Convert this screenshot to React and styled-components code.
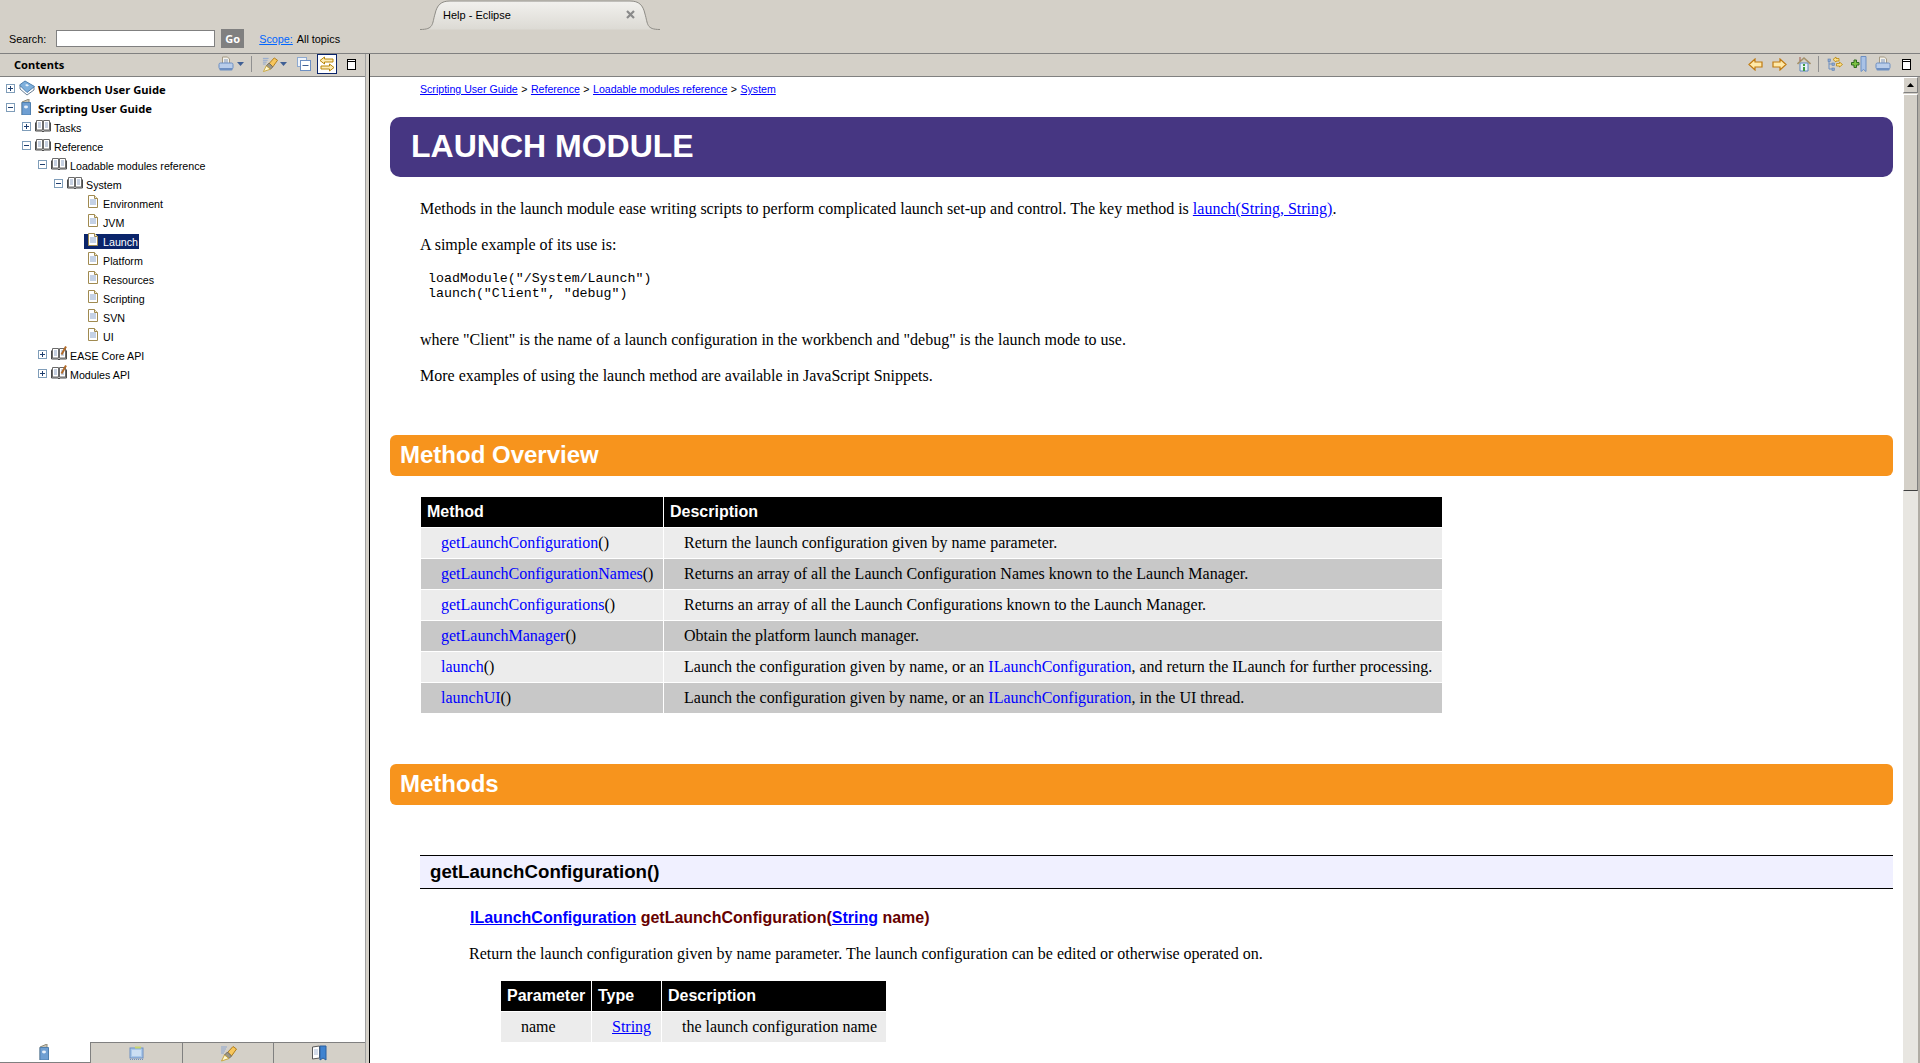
import React from "react";
import styled, { createGlobalStyle } from "styled-components";

const GlobalStyle = createGlobalStyle`
  html, body {
    margin: 0;
    padding: 0;
    height: 100%;
    overflow: hidden;
    background: #d4d0c8;
  }
  * { box-sizing: border-box; }
`;

const UI_FONT = `"Liberation Sans", Arial, sans-serif`;
const UI_BOLD = `"Noto Sans", "DejaVu Sans", sans-serif`;
const ARIAL = `"Liberation Sans", Arial, sans-serif`;
const TIMES = `"Liberation Serif", "Times New Roman", serif`;

const Shell = styled.div`
  width: 1920px;
  height: 1063px;
  display: flex;
  flex-direction: column;
  overflow: hidden;
  background: #d4d0c8;
  font-family: ${UI_FONT};
`;

const TabStrip = styled.div`
  height: 30px;
  padding-left: 420px;
  display: flex;
`;

const WindowTab = styled.div`
  position: relative;
  width: 240px;
  height: 30px;
  display: flex;
  align-items: center;
  justify-content: space-between;
  padding: 0 25px 1px 23px;
  font-size: 11px;
  color: #000;

  svg.shape {
    position: absolute;
    left: 0;
    top: 0;
  }
  span, svg.close {
    position: relative;
  }
`;

const SearchRow = styled.div`
  height: 23px;
  display: flex;
  align-items: center;
  padding: 0 0 6px 9px;
  font-size: 10.8px;
  color: #000;
`;

const SearchInput = styled.div`
  width: 159px;
  height: 17px;
  margin-left: 10px;
  background: #fff;
  border: 1px solid #808080;
`;

const GoButton = styled.div`
  width: 23px;
  height: 19px;
  margin-left: 6px;
  background: #808080;
  color: #fff;
  font: bold 11px ${UI_BOLD};
  display: flex;
  align-items: center;
  justify-content: center;
`;

const ScopeLink = styled.a`
  margin-left: 15px;
  color: #0066ff;
  text-decoration: underline;
`;

const ScopeValue = styled.span`
  margin-left: 4px;
`;

const Panes = styled.div`
  flex: 1;
  display: flex;
  min-height: 0;
  border-top: 1px solid #808080;
`;

const LeftPane = styled.aside`
  width: 365px;
  display: flex;
  flex-direction: column;
`;

const Sash = styled.div`
  width: 5px;
  background: #d4d0c8;
  border-right: 1px solid #000;
  border-left: 1px solid #a0a0a0;
`;

const RightPane = styled.main`
  flex: 1;
  min-width: 0;
  display: flex;
  flex-direction: column;
`;

const ViewBar = styled.div`
  height: 23px;
  flex: none;
  display: flex;
  align-items: center;
  padding-bottom: 2px;
  border-bottom: 1px solid #808080;
`;

const ViewTitle = styled.div`
  width: 218px;
  padding-left: 14px;
  font: 700 11.1px ${UI_BOLD};
  color: #000;
`;

const ToolSlot = styled.div`
  width: ${(p) => p.$w}px;
  margin-left: ${(p) => p.$ml || 0}px;
  height: 16px;
  flex: none;
  display: flex;
  align-items: center;
  justify-content: center;
`;

const ToolSep = styled.div`
  width: 1px;
  height: 16px;
  flex: none;
  margin-left: ${(p) => p.$ml}px;
  background: #909090;
`;

const ToggledTool = styled.div`
  width: 20px;
  height: 20px;
  flex: none;
  margin-left: ${(p) => p.$ml}px;
  background: #fff;
  border: 1px solid #0a246a;
  display: flex;
  align-items: center;
  justify-content: center;
`;

const TreeArea = styled.div`
  flex: 1;
  background: #fff;
  padding-top: 3px;
`;

const TreeRow = styled.div`
  height: 19px;
  display: flex;
  align-items: center;
  padding-left: ${(p) => 6 + p.$level * 16}px;
  font: ${(p) => (p.$bold ? `700 11.2px ${UI_BOLD}` : `400 10.7px ${UI_FONT}`)};
  color: #000;
`;

const Expander = styled.div`
  width: 9px;
  height: 9px;
  flex: none;
  margin: -2px 4px 0 0;
  border: 1px solid #7f9db9;
  background: #fff;
  position: relative;

  &::before {
    content: "";
    position: absolute;
    left: 1px;
    top: 3px;
    width: 5px;
    height: 1px;
    background: #1f3f6f;
  }
  ${(p) =>
    p.$plus &&
    `&::after {
      content: "";
      position: absolute;
      left: 3px;
      top: 1px;
      width: 1px;
      height: 5px;
      background: #1f3f6f;
    }`}
`;

const NoExpander = styled.div`
  width: 15px;
  flex: none;
`;

const TreeIcon = styled.div`
  width: 16px;
  height: 16px;
  flex: none;
  margin-top: -3px;
`;

const TreeLabel = styled.span`
  margin: ${(p) => (p.$bold ? 0 : 2)}px 0 0 ${(p) => (p.$leaf ? 2 : 3)}px;
  line-height: 15px;
`;

const SelectedBlock = styled.div`
  display: flex;
  align-items: center;
  height: 15px;
  padding: 0 1px 0 0;
  margin-left: -1px;
  border-left: 1px solid #0a246a;
  background: #0a246a;
  color: #fff;
`;

const BottomTabs = styled.div`
  height: 21px;
  flex: none;
  display: flex;
  background: #d4d0c8;
`;

const BottomTab = styled.div`
  width: ${(p) => p.$w}px;
  display: flex;
  align-items: center;
  justify-content: center;
  background: ${(p) => (p.$active ? "#fff" : "#d4d0c8")};
  border-top: ${(p) => (p.$active ? "0" : "1px solid #808080")};
  border-bottom: ${(p) => (p.$active ? "1px solid #808080" : "0")};
  border-left: ${(p) => (p.$active ? "0" : "1px solid #808080")};
`;

const BrowserBody = styled.div`
  flex: 1;
  min-height: 0;
  display: flex;
  background: #fff;
`;

const Doc = styled.div`
  flex: 1;
  min-width: 0;
  overflow: hidden;
  padding: 0 10px 0 20px;
  font: 16px/18px ${TIMES};
  color: #000;

  a {
    color: #0000ff;
  }
`;

const Breadcrumb = styled.div`
  height: 24px;
  margin-left: 30px;
  display: flex;
  align-items: center;
  gap: 3.5px;
  font: 10.6px ${UI_FONT};

  a {
    color: #0000ff;
    text-decoration: underline;
  }
`;

const TitleBanner = styled.h1`
  height: 60px;
  margin: 16px 0 0;
  padding: 0 0 1px 21px;
  display: flex;
  align-items: center;
  background: #463682;
  border-radius: 10px;
  color: #fff;
  font: bold 32px ${ARIAL};
`;

const Para = styled.p`
  margin: ${(p) => p.$top}px 0 0 ${(p) => p.$left || 30}px;
`;

const Code = styled.pre`
  margin: 17px 0 0 38px;
  font: 13.3px/15px "Liberation Mono", "Courier New", monospace;
`;

const SectionBanner = styled.h2`
  height: 41px;
  margin: ${(p) => p.$top}px 0 0;
  padding: 0 0 2px 10px;
  display: flex;
  align-items: center;
  background: #f7941d;
  border-radius: 6px;
  color: #fff;
  font: bold 24px ${ARIAL};
`;

const DataTable = styled.table`
  margin: ${(p) => p.$top}px 0 0 ${(p) => p.$left}px;
  border-collapse: separate;
  border-spacing: 1px;
  table-layout: fixed;
`;

const HeadCell = styled.th`
  height: 30px;
  padding: 0 0 0 ${(p) => p.$pad || 6}px;
  background: #000;
  color: #fff;
  text-align: left;
  font: bold 16px ${ARIAL};
`;

const BodyRow = styled.tr`
  td {
    background: ${(p) => (p.$alt ? "#c8c8c8" : "#ececec")};
  }
`;

const BodyCell = styled.td`
  height: 30px;
  padding: 0 0 0 20px;
  white-space: nowrap;
  font: 16px/18px ${TIMES};

  a {
    text-decoration: ${(p) => (p.$underline ? "underline" : "none")};
  }
`;

const MethodHeading = styled.h3`
  height: 34px;
  margin: 50px 0 0 30px;
  padding: 0 0 1px 10px;
  display: flex;
  align-items: center;
  background: #f0f0ff;
  border-top: 1px solid #000;
  border-bottom: 1px solid #000;
  font: bold 18.7px ${ARIAL};
  color: #000;
`;

const Signature = styled.div`
  margin: 20px 0 0 80px;
  font: bold 16px/18px ${ARIAL};
  color: #660000;
`;

const ScrollTrack = styled.div`
  width: 17px;
  flex: none;
  display: flex;
  flex-direction: column;
  background: #d4d0c8;
  border-right: 2px solid #b0aca4;
`;

const ScrollButton = styled.div`
  height: 16px;
  flex: none;
  display: flex;
  align-items: center;
  justify-content: center;
  border: 1px solid;
  border-color: #fff #808080 #808080 #fff;
`;

const ScrollThumb = styled.div`
  height: 397px;
  flex: none;
  margin-top: 1px;
  background: #d4d0c8;
  border: 1px solid;
  border-color: #fff #808080 #404040 #fff;
`;

const ScrollRest = styled.div`
  flex: 1;
  background: #e8e6e1;
`;

const HelpTabShape = () => (
  <svg className="shape" width="240" height="30" viewBox="0 0 240 30">
    <defs>
      <linearGradient id="tabfill" x1="0" y1="0" x2="0" y2="1">
        <stop offset="0" stopColor="#f2f1ee" />
        <stop offset="1" stopColor="#dcdad4" />
      </linearGradient>
    </defs>
    <path
      d="M0 29.5C14 29.5 12 24 15 14 17 5 21 1 30 1H210C219 1 223 5 225 14 228 24 226 29.5 240 29.5Z"
      fill="url(#tabfill)"
    />
    <path
      d="M0 29.5C14 29.5 12 24 15 14 17 5 21 1 30 1H210C219 1 223 5 225 14 228 24 226 29.5 240 29.5"
      fill="none"
      stroke="#8e8c86"
    />
  </svg>
);

const CloseMark = () => (
  <svg className="close" width="9" height="9" viewBox="0 0 9 9">
    <path d="M1 1l7 7M8 1L1 8" stroke="#8a8a8a" strokeWidth="2.2" />
  </svg>
);

const PrintIcon = () => (
  <svg width="16" height="16" viewBox="0 0 16 16">
    <path d="M4.5 1h5l2 2v5h-7z" fill="#f4f2ea" stroke="#a59a84" />
    <path d="M6 4h4M6 6h4" stroke="#7f94b8" />
    <rect x="1" y="7" width="14" height="6" rx="1.5" fill="#b9cdea" stroke="#6d8fc2" />
    <rect x="1.5" y="12" width="13" height="2.5" rx="1" fill="#6d8fc2" />
  </svg>
);

const Caret = () => (
  <svg width="7" height="4" viewBox="0 0 7 4">
    <path d="M0 0h7L3.5 4z" fill="#3f5f94" />
  </svg>
);

const HighlightIcon = () => (
  <svg width="17" height="17" viewBox="0 0 17 17">
    <path d="M1 2h6M1 4h5M1 6h4M1 8h3" stroke="#8fa7d0" />
    <path d="M7.5 7.5L13 1.5l3.5 2.5-5 7z" fill="#f7c65c" stroke="#b07c18" />
    <path d="M4.5 10l3-3 4 4-2.5 2.5z" fill="#9c9788" stroke="#6f6a5c" />
    <path d="M1.5 16l3-6 4.500 3.500z" fill="#fff8d0" stroke="#c9a63f" />
  </svg>
);

const CollapseIcon = () => (
  <svg width="14" height="14" viewBox="0 0 14 14">
    <rect x="0.5" y="0.5" width="9" height="9" fill="#eef3fa" stroke="#8ea9cf" />
    <rect x="3.5" y="3.5" width="10" height="10" fill="#fff" stroke="#6d8fc2" />
    <path d="M5.5 8.5h6" stroke="#3f5f94" />
  </svg>
);

const SyncIcon = () => (
  <svg width="16" height="16" viewBox="0 0 16 16">
    <path d="M1 4.5L5.5 1v2H14v3H5.5v2z" fill="#fdebb5" stroke="#b8860b" />
    <path d="M15 11.5L10.5 8v2H2v3h8.5v2z" fill="#fdebb5" stroke="#b8860b" />
  </svg>
);

const MaximizeIcon = () => (
  <svg width="9" height="11" viewBox="0 0 9 11">
    <rect x="0.5" y="0.5" width="8" height="10" fill="#fff" stroke="#000" />
    <path d="M0 2.5h9" stroke="#000" />
  </svg>
);

const BackIcon = ({ flip }) => (
  <svg width="15" height="13" viewBox="0 0 15 13" style={flip ? { transform: "scaleX(-1)" } : undefined}>
    <path d="M1 6.5L7 1v3h7v5H7v3z" fill="#ffe9a8" stroke="#c07a10" strokeWidth="1.2" />
  </svg>
);

const HomeIcon = () => (
  <svg width="14" height="16" viewBox="0 0 14 16">
    <path d="M3 7h8v8H3z" fill="#e8f1fb" stroke="#5d86bd" />
    <path d="M0.5 8L7 2l6.5 6" fill="none" stroke="#a5916a" strokeWidth="1.6" />
    <path d="M3 1v4" stroke="#a05a4a" />
    <rect x="6" y="8" width="2" height="2" fill="#3f9a3f" />
    <rect x="6" y="11" width="2" height="4" fill="#3f9a3f" />
  </svg>
);

const TocSyncIcon = () => (
  <svg width="16" height="16" viewBox="0 0 16 16">
    <path d="M2 4v9h3M2 8h3" fill="none" stroke="#6d8fc2" />
    <rect x="1" y="3" width="2.5" height="2.5" fill="#8ea9cf" stroke="#5d7fb2" strokeWidth=".6" />
    <rect x="5" y="7" width="2.5" height="2.5" fill="#8ea9cf" stroke="#5d7fb2" strokeWidth=".6" />
    <rect x="5" y="12" width="2.5" height="2.5" fill="#8ea9cf" stroke="#5d7fb2" strokeWidth=".6" />
    <path d="M6 3.5L9 1v1.5h3v2.5H9v1z" fill="#fde08a" stroke="#b8860b" strokeWidth=".8" />
    <path d="M15.5 8.5L12.5 6v1.5h-3V10h3v1z" fill="#fde08a" stroke="#b8860b" strokeWidth=".8" />
  </svg>
);

const BookmarkAddIcon = () => (
  <svg width="16" height="16" viewBox="0 0 16 16">
    <path d="M10 0.5h5v15l-2.5-2-2.5 2z" fill="#a9c2e6" stroke="#6d8fc2" />
    <path d="M0.5 6.5h2.5v-2.5h2.5v2.5h2.5v2.5h-2.5v2.5h-2.5v-2.5h-2.5z" fill="#7cc242" stroke="#2f6b1f" />
  </svg>
);

const GuideBook = () => (
  <svg width="16" height="16" viewBox="0 0 16 16">
    <path d="M1 6v3l7 6 7-5V7z" fill="#fff" stroke="#6a7f95" />
    <path d="M0.5 5L6 1l9.500 5.500L8 12.500z" fill="#7fb0dc" stroke="#4f7fae" />
    <path d="M6 5l2-1 2 1.500-2 1z" fill="#e8f1fb" />
  </svg>
);

const ScriptBook = () => (
  <svg width="16" height="16" viewBox="0 0 16 16">
    <path d="M3 3l7-3v14l-7 2z" fill="#c8c4b6" stroke="#8f8a78" />
    <path d="M3 3.5h8.5v12.5H3z" fill="#6f9fd2" stroke="#4f7fae" />
    <ellipse cx="7" cy="8" rx="2" ry="1.4" fill="#e8f1fb" />
  </svg>
);

const OpenBook = ({ pencil }) => (
  <svg width="16" height="16" viewBox="0 0 16 16">
    <path d="M0.5 4.500v8.500h6.500l1 1 1-1h6.500V4.500" fill="#cfcfcf" stroke="#4a4a4a" />
    <path d="M1.500 2.500h6v9.500h-6zM8.500 2.500h6v9.500h-6z" fill="#fff" stroke="#6a6a6a" />
    <path d="M3 5h3M3 7h3M3 9h3M10 5h3M10 7h3M10 9h3" stroke="#8fa3c4" />
    {pencil && <path d="M10.500 8.500l4.500-8" stroke="#b06a2a" strokeWidth="2" />}
  </svg>
);

const PageIcon = () => (
  <svg width="16" height="16" viewBox="0 0 16 16">
    <path d="M3.5 1.5H9.500l3 3v9h-9z" fill="#fff" stroke="#a08a50" />
    <path d="M5 6h6M5 8h6M5 10h6" stroke="#8aa4cc" />
    <path d="M9.500 1.500v3h3" fill="#f4ecd0" stroke="#a08a50" />
  </svg>
);

const ContentsTabIcon = () => <ScriptBook />;

const IndexIcon = () => (
  <svg width="16" height="16" viewBox="0 0 16 16">
    <rect x="1" y="3" width="13" height="10" fill="#a9c8ea" stroke="#6d8fc2" />
    <path d="M3 6h9M3 8h9M3 10h9" stroke="#eef5fc" />
    <path d="M1 14.500h13" stroke="#6d8fc2" strokeDasharray="1 1" />
    <rect x="6" y="1.500" width="6" height="2" fill="#c7d66a" />
  </svg>
);

const BookmarksIcon = () => (
  <svg width="16" height="16" viewBox="0 0 16 16">
    <path d="M0.500 2l7-1v12l-7 1z" fill="#fff" stroke="#5a5a5a" />
    <path d="M2 5h4M2 7h4M2 9h4" stroke="#a8b8d4" />
    <path d="M8 1h6v14l-3-2-3 2z" fill="#3f83d0" stroke="#2a5f9e" />
  </svg>
);

const treeItems = [
  { level: 0, label: "Workbench User Guide", bold: true, plus: true, icon: <GuideBook /> },
  { level: 0, label: "Scripting User Guide", bold: true, minus: true, icon: <ScriptBook /> },
  { level: 1, label: "Tasks", plus: true, icon: <OpenBook /> },
  { level: 1, label: "Reference", minus: true, icon: <OpenBook /> },
  { level: 2, label: "Loadable modules reference", minus: true, icon: <OpenBook /> },
  { level: 3, label: "System", minus: true, icon: <OpenBook /> },
  { level: 4, label: "Environment", icon: <PageIcon /> },
  { level: 4, label: "JVM", icon: <PageIcon /> },
  { level: 4, label: "Launch", selected: true, icon: <PageIcon /> },
  { level: 4, label: "Platform", icon: <PageIcon /> },
  { level: 4, label: "Resources", icon: <PageIcon /> },
  { level: 4, label: "Scripting", icon: <PageIcon /> },
  { level: 4, label: "SVN", icon: <PageIcon /> },
  { level: 4, label: "UI", icon: <PageIcon /> },
  { level: 2, label: "EASE Core API", plus: true, icon: <OpenBook pencil /> },
  { level: 2, label: "Modules API", plus: true, icon: <OpenBook pencil /> },
];

const overviewRows = [
  ["getLaunchConfiguration", "Return the launch configuration given by name parameter."],
  ["getLaunchConfigurationNames", "Returns an array of all the Launch Configuration Names known to the Launch Manager."],
  ["getLaunchConfigurations", "Returns an array of all the Launch Configurations known to the Launch Manager."],
  ["getLaunchManager", "Obtain the platform launch manager."],
  [
    "launch",
    <>
      Launch the configuration given by name, or an <a>ILaunchConfiguration</a>, and return the ILaunch for further
      processing.
    </>,
  ],
  [
    "launchUI",
    <>
      Launch the configuration given by name, or an <a>ILaunchConfiguration</a>, in the UI thread.
    </>,
  ],
];

const Tree = () => (
  <TreeArea>
    {treeItems.map((item) => {
      const leaf = !item.plus && !item.minus;
      const cell = (
        <>
          <TreeIcon>{item.icon}</TreeIcon>
          <TreeLabel $leaf={leaf} $bold={item.bold}>{item.label}</TreeLabel>
        </>
      );
      return (
        <TreeRow key={item.label} $level={item.level} $bold={item.bold}>
          {leaf ? <NoExpander /> : <Expander $plus={item.plus} />}
          {item.selected ? <SelectedBlock>{cell}</SelectedBlock> : cell}
        </TreeRow>
      );
    })}
  </TreeArea>
);

const App = () => {
  return (
    <Shell>
      <GlobalStyle />
      <TabStrip>
        <WindowTab>
          <HelpTabShape />
          <span>Help - Eclipse</span>
          <CloseMark />
        </WindowTab>
      </TabStrip>
      <SearchRow>
        Search:
        <SearchInput />
        <GoButton>Go</GoButton>
        <ScopeLink>Scope:</ScopeLink>
        <ScopeValue>All topics</ScopeValue>
      </SearchRow>
      <Panes>
        <LeftPane>
          <ViewBar>
            <ViewTitle>Contents</ViewTitle>
            <ToolSlot $w={16}><PrintIcon /></ToolSlot>
            <ToolSlot $w={7} $ml={3}><Caret /></ToolSlot>
            <ToolSep $ml={7} />
            <ToolSlot $w={16} $ml={10}><HighlightIcon /></ToolSlot>
            <ToolSlot $w={7} $ml={2}><Caret /></ToolSlot>
            <ToolSlot $w={14} $ml={10}><CollapseIcon /></ToolSlot>
            <ToggledTool $ml={6}><SyncIcon /></ToggledTool>
            <ToolSlot $w={9} $ml={10}><MaximizeIcon /></ToolSlot>
          </ViewBar>
          <Tree />
          <BottomTabs>
            <BottomTab $w={90} $active><ContentsTabIcon /></BottomTab>
            <BottomTab $w={92}><IndexIcon /></BottomTab>
            <BottomTab $w={91}><HighlightIcon /></BottomTab>
            <BottomTab $w={92}><BookmarksIcon /></BottomTab>
          </BottomTabs>
        </LeftPane>
        <Sash />
        <RightPane>
          <ViewBar>
            <ToolSlot $w={15} $ml={1378}><BackIcon /></ToolSlot>
            <ToolSlot $w={15} $ml={9}><BackIcon flip /></ToolSlot>
            <ToolSlot $w={14} $ml={10}><HomeIcon /></ToolSlot>
            <ToolSep $ml={7} />
            <ToolSlot $w={16} $ml={8}><TocSyncIcon /></ToolSlot>
            <ToolSlot $w={16} $ml={8}><BookmarkAddIcon /></ToolSlot>
            <ToolSlot $w={16} $ml={8}><PrintIcon /></ToolSlot>
            <ToolSlot $w={9} $ml={11}><MaximizeIcon /></ToolSlot>
          </ViewBar>
          <BrowserBody>
            <Doc>
              <Breadcrumb>
                <a>Scripting User Guide</a>&gt;<a>Reference</a>&gt;<a>Loadable modules reference</a>&gt;<a>System</a>
              </Breadcrumb>
              <TitleBanner>LAUNCH MODULE</TitleBanner>
              <Para $top={23}>
                Methods in the launch module ease writing scripts to perform complicated launch set-up and control. The
                key method is <a href="#launch">launch(String, String)</a>.
              </Para>
              <Para $top={18}>A simple example of its use is:</Para>
              <Code>{`loadModule("/System/Launch")\nlaunch("Client", "debug")`}</Code>
              <Para $top={30}>
                where "Client" is the name of a launch configuration in the workbench and "debug" is the launch mode to
                use.
              </Para>
              <Para $top={18}>More examples of using the launch method are available in JavaScript Snippets.</Para>

              <SectionBanner $top={50}>Method Overview</SectionBanner>
              <DataTable $top={20} $left={30}>
                <colgroup>
                  <col width="242" />
                  <col width="778" />
                </colgroup>
                <thead>
                  <tr>
                    <HeadCell>Method</HeadCell>
                    <HeadCell>Description</HeadCell>
                  </tr>
                </thead>
                <tbody>
                  {overviewRows.map(([name, desc], i) => (
                    <BodyRow key={name} $alt={i % 2 === 1}>
                      <BodyCell><a>{name}</a>()</BodyCell>
                      <BodyCell>{desc}</BodyCell>
                    </BodyRow>
                  ))}
                </tbody>
              </DataTable>

              <SectionBanner $top={50}>Methods</SectionBanner>
              <MethodHeading>getLaunchConfiguration()</MethodHeading>
              <Signature>
                <a href="#cfg">ILaunchConfiguration</a> getLaunchConfiguration(<a href="#str">String</a> name)
              </Signature>
              <Para $top={18} $left={79}>
                Return the launch configuration given by name parameter. The launch configuration can be edited or
                otherwise operated on.
              </Para>
              <DataTable $top={17} $left={110}>
                <colgroup>
                  <col width="90" />
                  <col width="69" />
                  <col width="224" />
                </colgroup>
                <thead>
                  <tr>
                    <HeadCell>Parameter</HeadCell>
                    <HeadCell>Type</HeadCell>
                    <HeadCell>Description</HeadCell>
                  </tr>
                </thead>
                <tbody>
                  <BodyRow>
                    <BodyCell>name</BodyCell>
                    <BodyCell $underline><a>String</a></BodyCell>
                    <BodyCell>the launch configuration name</BodyCell>
                  </BodyRow>
                </tbody>
              </DataTable>
            </Doc>
            <ScrollTrack>
              <ScrollButton>
                <svg width="7" height="4" viewBox="0 0 7 4"><path d="M3.5 0L7 4H0z" fill="#000" /></svg>
              </ScrollButton>
              <ScrollThumb />
              <ScrollRest />
            </ScrollTrack>
          </BrowserBody>
        </RightPane>
      </Panes>
    </Shell>
  );
};

export default App;
